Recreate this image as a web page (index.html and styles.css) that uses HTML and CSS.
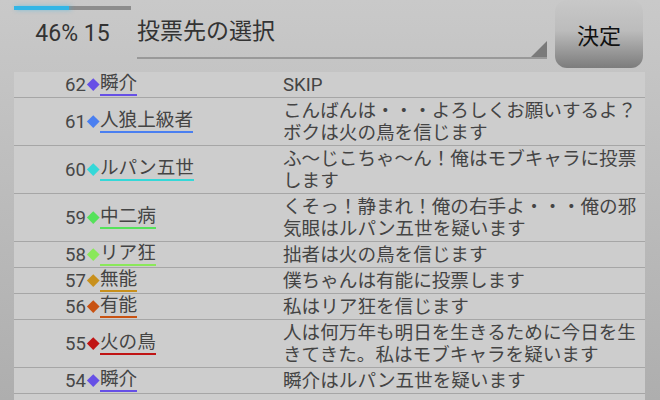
FILE: index.html
```html
<!DOCTYPE html>
<html lang="ja">
<head>
    <meta charset="UTF-8">
    <meta name="viewport" content="width=device-width, initial-scale=1.0">
    <title>投票先の選択</title>
    <link rel="stylesheet" href="styles.css">
</head>
<body>
    <div class="screen">
        <header class="top-bar">
            <div class="status">
                <div class="progress"><div class="progress-fill"></div></div>
                <div class="count">46% 15</div>
            </div>
            <div class="picker">投票先の選択</div>
            <button class="decide">決定</button>
        </header>

        <div class="vote-list">
            <div class="row">
                <span class="num">62</span>
                <span class="mark c-shunsuke"></span>
                <span class="name c-shunsuke">瞬介</span>
                <span class="msg">SKIP</span>
            </div>
            <div class="row">
                <span class="num">61</span>
                <span class="mark c-jinro"></span>
                <span class="name c-jinro">人狼上級者</span>
                <span class="msg">こんばんは・・・よろしくお願いするよ？ボクは火の鳥を信じます</span>
            </div>
            <div class="row">
                <span class="num">60</span>
                <span class="mark c-lupin"></span>
                <span class="name c-lupin">ルパン五世</span>
                <span class="msg">ふ～じこちゃ～ん！俺はモブキャラに投票します</span>
            </div>
            <div class="row">
                <span class="num">59</span>
                <span class="mark c-chuni"></span>
                <span class="name c-chuni">中二病</span>
                <span class="msg">くそっ！静まれ！俺の右手よ・・・俺の邪気眼はルパン五世を疑います</span>
            </div>
            <div class="row">
                <span class="num">58</span>
                <span class="mark c-riajuu"></span>
                <span class="name c-riajuu">リア狂</span>
                <span class="msg">拙者は火の鳥を信じます</span>
            </div>
            <div class="row">
                <span class="num">57</span>
                <span class="mark c-munou"></span>
                <span class="name c-munou">無能</span>
                <span class="msg">僕ちゃんは有能に投票します</span>
            </div>
            <div class="row">
                <span class="num">56</span>
                <span class="mark c-yuunou"></span>
                <span class="name c-yuunou">有能</span>
                <span class="msg">私はリア狂を信じます</span>
            </div>
            <div class="row">
                <span class="num">55</span>
                <span class="mark c-hinotori"></span>
                <span class="name c-hinotori">火の鳥</span>
                <span class="msg">人は何万年も明日を生きるために今日を生きてきた。私はモブキャラを疑います</span>
            </div>
            <div class="row">
                <span class="num">54</span>
                <span class="mark c-shunsuke"></span>
                <span class="name c-shunsuke">瞬介</span>
                <span class="msg">瞬介はルパン五世を疑います</span>
            </div>
        </div>
    </div>
</body>
</html>
```

FILE: styles.css
```css
body, html {
    margin: 0;
    padding: 0;
    height: 100%;
    overflow: hidden;
}

body {
    background: linear-gradient(#c9c9c9, #aeaeae);
    font-family: Roboto, "Noto Sans CJK JP", sans-serif;
    color: #444;
}

.screen {
    height: 100%;
    display: flex;
    flex-direction: column;
}

/* top bar */
.top-bar {
    height: 72px;
    flex: none;
    display: flex;
    align-items: flex-start;
    padding: 0 17px 0 14px;
}

.status {
    width: 117px;
}

.progress {
    margin-top: 6px;
    height: 4px;
    background: #8d8d8d;
}

.progress-fill {
    width: 55px;
    height: 100%;
    background: #33b5e5;
    box-shadow: 2px 0 4px rgba(51, 181, 229, 0.5);
}

.count {
    margin-top: 9px;
    font-size: 23px;
    line-height: 30px;
    text-align: center;
    color: #333;
}

.picker {
    position: relative;
    margin-left: 6px;
    width: 410px;
    height: 59px;
    padding-top: 17px;
    box-sizing: border-box;
    border-bottom: 2px solid #999;
    font-size: 23px;
    line-height: 30px;
    color: #333;
}

.picker::after {
    content: "";
    position: absolute;
    right: 0;
    bottom: 0;
    width: 16px;
    height: 16px;
    background: #7a7a7a;
    clip-path: polygon(100% 0, 100% 100%, 0 100%);
}

.decide {
    margin-left: 8px;
    width: 88px;
    height: 68px;
    border: none;
    border-radius: 12px;
    background: linear-gradient(#c8c8c8 0%, #bcbcbc 45%, #7c7c7c 100%);
    font-family: "Noto Sans CJK JP", sans-serif;
    font-size: 22px;
    color: #111;
    padding: 0;
}

/* vote list */
.vote-list {
    flex: 1;
    margin: 0 15px 0 14px;
    background: #cdcdcd;
    overflow: hidden;
}

.row {
    display: grid;
    grid-template-columns: 72px 14px 183px 1fr;
    align-items: center;
    border-bottom: 1px solid #a6a6a6;
    font-size: 18.6px;
}

.num {
    text-align: right;
    line-height: 20px;
    color: #474747;
}

.mark {
    justify-self: center;
    width: 8.5px;
    height: 8.5px;
    transform: rotate(45deg);
    background: currentColor;
}

.name {
    justify-self: start;
    line-height: 20px;
    padding-bottom: 1px;
    border-bottom: 2px solid currentColor;
}

.name, .msg {
    font-family: Roboto, "Noto Sans CJK JP", sans-serif;
}

.msg {
    line-height: 22px;
    padding: 2px 0 1px;
    color: #444;
}

/* name colours: the text stays dark, the mark and line take the colour */
.c-shunsuke { color: #6650e6; }
.c-jinro { color: #4a7ff0; }
.c-lupin { color: #35d8d8; }
.c-chuni { color: #55e25a; }
.c-riajuu { color: #8ae85a; }
.c-munou { color: #c8901c; }
.c-yuunou { color: #c85212; }
.c-hinotori { color: #c01414; }

.name.c-shunsuke, .name.c-jinro, .name.c-lupin, .name.c-chuni,
.name.c-riajuu, .name.c-munou, .name.c-yuunou, .name.c-hinotori {
    -webkit-text-fill-color: #444;
}
```
